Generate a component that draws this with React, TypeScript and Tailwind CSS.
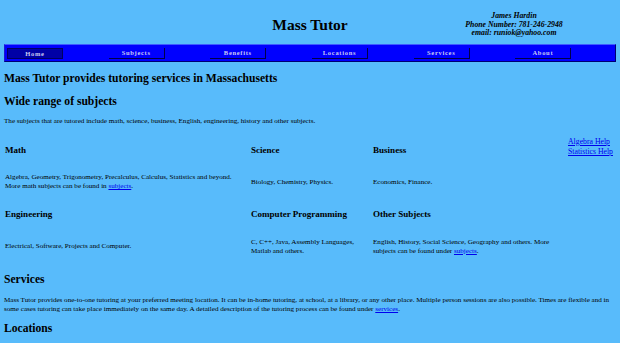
const navItems = ['Home', 'Subjects', 'Benefits', 'Locations', 'Services', 'About'];

function NavButton({ label, active }: { label: string; active: boolean }) {
  return (
    <div className="flex-1 flex items-center pl-[2px]">
      <div
        className={`w-[56px] h-[11px] flex items-center justify-center text-[6.5px] font-bold tracking-[0.7px] text-[#c9c9f2] ${
          active
            ? 'bg-[#0000a6] border border-[#000060]'
            : 'border-r-[1.5px] border-b-[1.5px] border-[#00004a]'
        }`}
      >
        {label}
      </div>
    </div>
  );
}

export default function App() {
  return (
    <div className="min-h-[343px] bg-[#58bbfb] px-[4px] pt-[4px] font-['Liberation_Serif','Times_New_Roman',serif] text-[7.1px] leading-[9px] text-black">
      {/* header */}
      <div className="grid grid-cols-3 h-[40px] items-center pt-[2px]">
        <div />
        <h1 className="text-center text-[15.5px] leading-[1.15] font-bold">Mass Tutor</h1>
        <div className="text-center italic font-bold text-[7.75px] leading-[8.9px]">
          <div>James Hardin</div>
          <div>Phone Number: 781-246-2948</div>
          <div>email: runiok@yahoo.com</div>
        </div>
      </div>

      {/* nav */}
      <div className="flex h-[18px] bg-[#0000ff] border border-t-[#3f5cff] border-l-[#1a1ad0] border-r-[#000070] border-b-[#000070] border-b-[1.5px]">
        {navItems.map((item, i) => (
          <NavButton key={item} label={item} active={i === 0} />
        ))}
      </div>

      <h2 className="text-[11.6px] leading-[1.15] font-bold my-[9.6px]">Mass Tutor provides tutoring services in Massachusetts</h2>
      <h2 className="text-[11.6px] leading-[1.15] font-bold my-[9.6px]">Wide range of subjects</h2>
      <p className="my-[7.1px]">
        The subjects that are tutored include math, science, business, English, engineering, history and other subjects.
      </p>

      {/* subjects table */}
      <div className="grid grid-cols-[246px_122px_195px_1fr] gap-y-[2px] pl-[1px] pt-[2px]">
        <h3 className="text-[9.06px] leading-[1.15] font-bold my-[9.06px]">Math</h3>
        <h3 className="text-[9.06px] leading-[1.15] font-bold my-[9.06px]">Science</h3>
        <h3 className="text-[9.06px] leading-[1.15] font-bold my-[9.06px]">Business</h3>
        <div className="flex flex-col items-start text-[7.75px] leading-[10px] pt-[1px]">
          <a href="#" className="text-[#0000ee] underline">Algebra Help</a>
          <a href="#" className="text-[#0000ee] underline">Statistics Help</a>
        </div>

        <p className="my-[7.1px] self-center">
          Algebra, Geometry, Trigonometry, Precalculus, Calculus, Statistics and beyond.
          <br />
          More math subjects can be found in{' '}
          <a href="#" className="text-[#0000ee] underline">subjects</a>.
        </p>
        <p className="my-[7.1px] self-center">Biology, Chemistry, Physics.</p>
        <p className="my-[7.1px] self-center">Economics, Finance.</p>
        <div />

        <h3 className="text-[9.06px] leading-[1.15] font-bold my-[9.06px]">Engineering</h3>
        <h3 className="text-[9.06px] leading-[1.15] font-bold my-[9.06px]">Computer Programming</h3>
        <h3 className="text-[9.06px] leading-[1.15] font-bold my-[9.06px]">Other Subjects</h3>
        <div />

        <p className="my-[7.1px] self-center">Electrical, Software, Projects and Computer.</p>
        <p className="my-[7.1px] self-center">
          C, C++, Java, Assembly Languages,
          <br />
          Matlab and others.
        </p>
        <p className="my-[7.1px] self-center">
          English, History, Social Science, Geography and others. More
          <br />
          subjects can be found under{' '}
          <a href="#" className="text-[#0000ee] underline">subjects</a>.
        </p>
        <div />
      </div>

      <h2 className="text-[11.6px] leading-[1.15] font-bold mt-[10px] mb-[9.6px]">Services</h2>
      <p className="my-[7.1px]">
        Mass Tutor provides one-to-one tutoring at your preferred meeting location. It can be in-home tutoring, at school, at a library, or any other place. Multiple person sessions are also possible. Times are flexible and in
        <br />
        some cases tutoring can take place immediately on the same day. A detailed description of the tutoring process can be found under{' '}
        <a href="#" className="text-[#0000ee] underline">services</a>.
      </p>
      <h2 className="text-[11.6px] leading-[1.15] font-bold mt-[8px] mb-[9.6px]">Locations</h2>
    </div>
  );
}
